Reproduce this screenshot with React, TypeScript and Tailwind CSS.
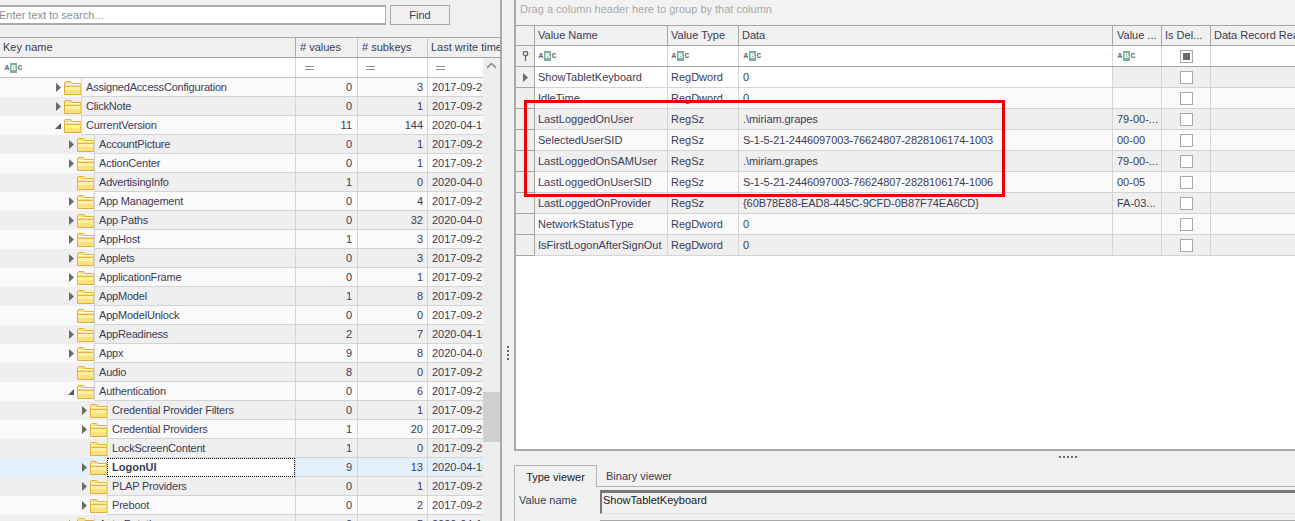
import React from 'react';

const keyRows = [
  { name: 'AssignedAccessConfiguration', level: 0, arrow: 'right', values: 0, subkeys: 3, date: '2017-09-29' },
  { name: 'ClickNote', level: 0, arrow: 'right', values: 0, subkeys: 1, date: '2017-09-29' },
  { name: 'CurrentVersion', level: 0, arrow: 'down', values: 11, subkeys: 144, date: '2020-04-16' },
  { name: 'AccountPicture', level: 1, arrow: 'right', values: 0, subkeys: 1, date: '2017-09-29' },
  { name: 'ActionCenter', level: 1, arrow: 'right', values: 0, subkeys: 1, date: '2017-09-29' },
  { name: 'AdvertisingInfo', level: 1, arrow: '', values: 1, subkeys: 0, date: '2020-04-02' },
  { name: 'App Management', level: 1, arrow: 'right', values: 0, subkeys: 4, date: '2017-09-29' },
  { name: 'App Paths', level: 1, arrow: 'right', values: 0, subkeys: 32, date: '2020-04-02' },
  { name: 'AppHost', level: 1, arrow: 'right', values: 1, subkeys: 3, date: '2017-09-29' },
  { name: 'Applets', level: 1, arrow: 'right', values: 0, subkeys: 3, date: '2017-09-29' },
  { name: 'ApplicationFrame', level: 1, arrow: 'right', values: 0, subkeys: 1, date: '2017-09-29' },
  { name: 'AppModel', level: 1, arrow: 'right', values: 1, subkeys: 8, date: '2017-09-29' },
  { name: 'AppModelUnlock', level: 1, arrow: '', values: 0, subkeys: 0, date: '2017-09-29' },
  { name: 'AppReadiness', level: 1, arrow: 'right', values: 2, subkeys: 7, date: '2020-04-16' },
  { name: 'Appx', level: 1, arrow: 'right', values: 9, subkeys: 8, date: '2020-04-02' },
  { name: 'Audio', level: 1, arrow: '', values: 8, subkeys: 0, date: '2017-09-29' },
  { name: 'Authentication', level: 1, arrow: 'down', values: 0, subkeys: 6, date: '2017-09-29' },
  { name: 'Credential Provider Filters', level: 2, arrow: 'right', values: 0, subkeys: 1, date: '2017-09-29' },
  { name: 'Credential Providers', level: 2, arrow: 'right', values: 1, subkeys: 20, date: '2017-09-29' },
  { name: 'LockScreenContent', level: 2, arrow: '', values: 1, subkeys: 0, date: '2017-09-29' },
  { name: 'LogonUI', level: 2, arrow: 'right', values: 9, subkeys: 13, date: '2020-04-16', selected: true },
  { name: 'PLAP Providers', level: 2, arrow: 'right', values: 0, subkeys: 1, date: '2017-09-29' },
  { name: 'Preboot', level: 2, arrow: 'right', values: 0, subkeys: 2, date: '2017-09-29' },
  { name: 'Auto Rotation', level: 1, arrow: 'right', values: 0, subkeys: 5, date: '2020-04-16' },
];

const valueRows = [
  { name: 'ShowTabletKeyboard', type: 'RegDword', data: '0', raw: '' },
  { name: 'IdleTime', type: 'RegDword', data: '0', raw: '' },
  { name: 'LastLoggedOnUser', type: 'RegSz', data: '.\\miriam.grapes', raw: '79-00-...' },
  { name: 'SelectedUserSID', type: 'RegSz', data: 'S-1-5-21-2446097003-76624807-2828106174-1003', raw: '00-00' },
  { name: 'LastLoggedOnSAMUser', type: 'RegSz', data: '.\\miriam.grapes', raw: '79-00-...' },
  { name: 'LastLoggedOnUserSID', type: 'RegSz', data: 'S-1-5-21-2446097003-76624807-2828106174-1006', raw: '00-05' },
  { name: 'LastLoggedOnProvider', type: 'RegSz', data: '{60B78E88-EAD8-445C-9CFD-0B87F74EA6CD}', raw: 'FA-03...' },
  { name: 'NetworkStatusType', type: 'RegDword', data: '0', raw: '' },
  { name: 'IsFirstLogonAfterSignOut', type: 'RegDword', data: '0', raw: '' },
];

const spacerWidths = ['w-[81px]', 'w-[94px]', 'w-[107px]'];

const Folder = () => (
  <svg width="17" height="14" viewBox="0 0 17 14" className="shrink-0">
    <path d="M.5 13.5V1.5l1-1h5l1.500 2h8.500l.5 .5v10.500z" fill="#fbe27e" stroke="#e3ae3c" />
    <path d="M1 3.500h15" stroke="#fffbe0" strokeWidth="1" />
    <path d="M1 5.500h15" stroke="#e4b544" strokeWidth="1" />
    <path d="M1 6h15v3H1z" fill="#fdf0a8" />
  </svg>
);

const Arrow = ({ dir }: { dir: string }) =>
  dir === 'right' ? (
    <svg width="5" height="9" viewBox="0 0 5 9" className="shrink-0">
      <path d="M0 0l5 4.500L0 9z" fill="#6a6a6a" />
    </svg>
  ) : (
    <svg width="6" height="6" viewBox="0 0 6 6" className="shrink-0">
      <path d="M6 0v6H0z" fill="#5a5a5a" />
    </svg>
  );

const AbcIcon = () => (
  <span className="flex items-center text-[8px] leading-[10px] font-bold text-[#666] font-['Liberation_Mono',monospace] select-none">
    <span className="w-[4px] flex justify-center">A</span>
    <span className="w-[7px] h-[10px] mx-[1px] flex justify-center bg-[#7fb09f] text-white">B</span>
    <span className="w-[4px] flex justify-center">C</span>
  </span>
);

const Eq = () => (
  <span className="block w-[9px] h-[4px] border-y border-[#8c8c8c]" />
);

const Check = ({ mixed }: { mixed?: boolean }) => (
  <span className="flex items-center justify-center w-[13px] h-[13px] border border-[#a8a8a8] bg-white">
    {mixed && <span className="block w-[7px] h-[7px] bg-[#6b6b6b]" />}
  </span>
);

const KeyPane = () => (
  <div className="w-[502px] shrink-0 h-full flex flex-col border-r-2 border-[#a9a9a9] overflow-hidden">
    <div className="flex h-[37px] pt-[5px] shrink-0">
      <input
        readOnly
        placeholder="Enter text to search..."
        className="w-[393px] h-[20px] -ml-[7px] pl-[5px] bg-white border-2 border-[#ababab] border-x-[1px] outline-none placeholder:text-[#8d8d8d]"
      />
      <button className="w-[60px] h-[20px] ml-[4px] bg-[#f0f0f0] border border-[#a8a8a8]">Find</button>
    </div>
    <div className="flex h-[21px] shrink-0 border-y border-[#a6a6a6] bg-[#f0f0f0]">
      <div className="w-[296px] pl-[3px] leading-[18px] border-r border-[#a6a6a6]">Key name</div>
      <div className="w-[62px] pl-[4px] leading-[18px] border-r border-[#c8c8c8]"># values</div>
      <div className="w-[70px] pl-[4px] leading-[18px] border-r border-[#c8c8c8]"># subkeys</div>
      <div className="flex-1 pl-[3px] leading-[18px] whitespace-nowrap overflow-hidden">Last write time</div>
    </div>
    <div className="flex-1 flex min-h-0">
      <div className="w-[483px] shrink-0 overflow-hidden">
        <div className="flex h-[20px] border-b border-[#c4c4c4] bg-white">
          <div className="w-[296px] pl-[5px] flex items-center border-r border-[#d4d4d4]"><AbcIcon /></div>
          <div className="w-[62px] pl-[9px] flex items-center border-r border-[#d4d4d4]"><Eq /></div>
          <div className="w-[70px] pl-[8px] flex items-center border-r border-[#d4d4d4]"><Eq /></div>
          <div className="flex-1 pl-[8px] flex items-center"><Eq /></div>
        </div>
        {keyRows.map((row, i) => (
          <div
            key={row.name}
            className={`flex h-[19px] ${row.selected ? 'bg-[#e4f0f9]' : i % 2 === 0 ? 'bg-[#fafafa]' : 'bg-[#efefef]'}`}
          >
            <div className="w-[296px] shrink-0 flex border-r border-[#d4d4d4]">
              <div className={`${spacerWidths[row.level]} shrink-0 flex items-center justify-end`}>
                {row.arrow && <Arrow dir={row.arrow} />}
                <span className="ml-[3px]"><Folder /></span>
              </div>
              {row.selected ? (
                <div className="flex-1 pl-[4px] leading-[17px] font-bold bg-white border border-dotted border-black">
                  {row.name}
                </div>
              ) : (
                <div className="flex-1 pl-[4px] leading-[18px] tracking-[-0.2px] border-l border-b border-[#d4d4d4] whitespace-nowrap">
                  {row.name}
                </div>
              )}
            </div>
            <div className="w-[62px] shrink-0 pr-[5px] text-right leading-[18px] border-r border-b border-[#d4d4d4]">{row.values}</div>
            <div className="w-[70px] shrink-0 pr-[4px] text-right leading-[18px] border-r border-b border-[#d4d4d4]">{row.subkeys}</div>
            <div className="flex-1 pl-[4px] leading-[18px] border-b border-[#d4d4d4] whitespace-nowrap overflow-hidden">{row.date}</div>
          </div>
        ))}
      </div>
      <div className="flex-1 bg-[#eeeeee] flex flex-col items-center">
        <svg width="9" height="6" viewBox="0 0 9 6" className="mt-[5px]">
          <path d="M0 5l4.500-4.500L9 5" fill="none" stroke="#8a8a8a" strokeWidth="1.600" />
        </svg>
        <div className="w-full h-[50px] mt-[323px] bg-[#cfcfcf]" />
      </div>
    </div>
  </div>
);

const Splitter = () => (
  <div className="w-[12px] shrink-0 h-full bg-[#f0f0f0] flex flex-col items-center justify-center gap-[2px] pb-[1px] pt-[186px]">
    {[0, 1, 2, 3].map((d) => (
      <span key={d} className="block w-[2px] h-[2px] bg-[#666]" />
    ))}
  </div>
);

const ValuesGrid = () => (
  <div className="h-[451px] shrink-0 flex flex-col border-l-2 border-b-2 border-[#a9a9a9] bg-white">
    <div className="h-[25px] shrink-0 pl-[4px] leading-[19px] bg-[#f2f2f2] text-[#a9a9a9]">
      Drag a column header here to group by that column
    </div>
    <div className="flex h-[21px] shrink-0 border-y border-[#a6a6a6] bg-[#f0f0f0]">
      <div className="w-[19px] border-r border-[#a6a6a6]" />
      <div className="w-[133px] pl-[3px] leading-[18px] border-r border-[#a6a6a6]">Value Name</div>
      <div className="w-[71px] pl-[3px] leading-[18px] border-r border-[#a6a6a6]">Value Type</div>
      <div className="w-[374px] pl-[3px] leading-[18px] border-r border-[#a6a6a6]">Data</div>
      <div className="w-[49px] pl-[4px] leading-[18px] border-r border-[#a6a6a6]">Value ...</div>
      <div className="w-[49px] pl-[3px] leading-[18px] border-r border-[#a6a6a6]">Is Del...</div>
      <div className="flex-1 pl-[3px] leading-[18px] whitespace-nowrap overflow-hidden">Data Record Reallocated</div>
    </div>
    <div className="flex h-[21px] shrink-0 border-b border-[#a6a6a6]">
      <div className="w-[19px] flex items-center justify-center bg-[#efefef] border-r border-[#a6a6a6]">
        <svg width="7" height="10" viewBox="0 0 7 10">
          <circle cx="3.500" cy="2.500" r="2.200" fill="none" stroke="#666" strokeWidth="1.300" />
          <path d="M3.500 5v5" stroke="#666" strokeWidth="1.200" />
        </svg>
      </div>
      <div className="w-[133px] pl-[4px] flex items-center border-r border-[#d4d4d4]"><AbcIcon /></div>
      <div className="w-[71px] pl-[4px] flex items-center border-r border-[#d4d4d4]"><AbcIcon /></div>
      <div className="w-[374px] pl-[5px] flex items-center border-r border-[#d4d4d4]"><AbcIcon /></div>
      <div className="w-[49px] pl-[5px] flex items-center border-r border-[#d4d4d4]"><AbcIcon /></div>
      <div className="w-[49px] flex items-center justify-center border-r border-[#d4d4d4]"><Check mixed /></div>
      <div className="flex-1" />
    </div>
    {valueRows.map((row, i) => {
      const base = i % 2 === 0 ? 'bg-[#efefef]' : 'bg-[#fafafa]';
      const main = i === 0 ? 'bg-white' : base;
      return (
        <div key={row.name} className="flex h-[21px] shrink-0">
          <div className="w-[19px] flex items-center justify-center bg-[#efefef] border-r border-b border-[#a6a6a6]">
            {i === 0 && <Arrow dir="right" />}
          </div>
          <div className={`w-[133px] pl-[3px] leading-[20px] border-r border-b border-[#d4d4d4] whitespace-nowrap ${main}`}>{row.name}</div>
          <div className={`w-[71px] pl-[3px] leading-[20px] border-r border-b border-[#d4d4d4] ${main}`}>{row.type}</div>
          <div className={`w-[374px] pl-[4px] leading-[20px] tracking-[-0.07px] border-r border-b border-[#d4d4d4] ${main}`}>{row.data}</div>
          <div className={`w-[49px] pl-[4px] leading-[20px] border-r border-b border-[#d4d4d4] ${base}`}>{row.raw}</div>
          <div className={`w-[49px] flex items-center justify-center border-r border-b border-[#d4d4d4] ${base}`}><Check /></div>
          <div className={`flex-1 border-b border-[#d4d4d4] ${base}`} />
        </div>
      );
    })}
  </div>
);

const Viewer = () => (
  <div className="flex-1 min-h-0 flex flex-col">
    <div className="h-[14px] shrink-0 flex gap-[2px] pt-[5px] pl-[545px]">
      {[0, 1, 2, 3, 4].map((d) => (
        <span key={d} className="block w-[2px] h-[2px] bg-[#666]" />
      ))}
    </div>
    <div className="flex h-[22px] shrink-0">
      <div className="w-[83px] text-center leading-[23px] text-[#222] border-l border-t border-r border-[#b4b4b4]">Type viewer</div>
      <div className="flex-1 pl-[9px] leading-[22px] border-b border-[#b4b4b4]">Binary viewer</div>
    </div>
    <div className="flex-1 flex border-l border-[#b4b4b4] pt-[3px]">
      <div className="w-[85px] shrink-0 pl-[4px] leading-[20px]">Value name</div>
      <div className="flex-1 flex flex-col">
        <div className="h-[24px] shrink-0 pl-[1px] leading-[15px] text-[#222] border-t-[3px] border-l-2 border-b border-[#777] border-b-[#e4e4e4] bg-[#f0f0f0]">
          ShowTabletKeyboard
        </div>
        <div className="h-[1px] mt-[6px] bg-[#a9a9a9]" />
      </div>
    </div>
  </div>
);

export default function App() {
  return (
    <div className="relative w-[1295px] h-[521px] overflow-hidden flex bg-[#f0f0f0] text-[11px] text-[#3c3c55] font-['Liberation_Sans',sans-serif]">
      <KeyPane />
      <Splitter />
      <div className="flex-1 min-w-0 h-full flex flex-col">
        <ValuesGrid />
        <Viewer />
      </div>
      {/* red annotation drawn on top of the screenshot */}
      <div className="absolute left-[524px] top-[100px] w-[481px] h-[97px] border-[3px] border-[#f00000]" />
    </div>
  );
}
